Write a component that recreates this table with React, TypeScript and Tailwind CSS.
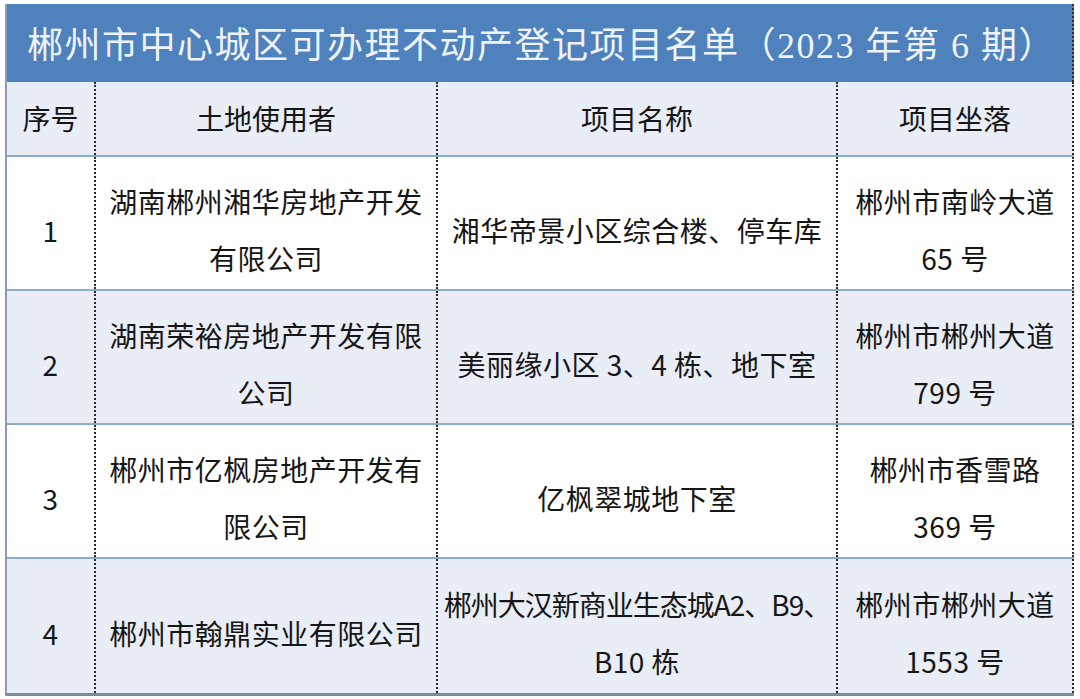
import React from 'react';

type Row = {
  no: string;
  owner: string[];
  project: string[];
  location: string[];
  shaded: boolean;
};

const rows: Row[] = [
  {
    no: '1',
    owner: ['湖南郴州湘华房地产开发', '有限公司'],
    project: ['湘华帝景小区综合楼、停车库'],
    location: ['郴州市南岭大道', '65 号'],
    shaded: false,
  },
  {
    no: '2',
    owner: ['湖南荣裕房地产开发有限', '公司'],
    project: ['美丽缘小区 3、4 栋、地下室'],
    location: ['郴州市郴州大道', '799 号'],
    shaded: true,
  },
  {
    no: '3',
    owner: ['郴州市亿枫房地产开发有', '限公司'],
    project: ['亿枫翠城地下室'],
    location: ['郴州市香雪路', '369 号'],
    shaded: false,
  },
  {
    no: '4',
    owner: ['郴州市翰鼎实业有限公司'],
    project: ['郴州大汉新商业生态城A2、B9、', 'B10 栋'],
    location: ['郴州市郴州大道', '1553 号'],
    shaded: true,
  },
];

const cellBase =
  'flex flex-col items-center justify-center text-center whitespace-nowrap border-r-2 border-dotted border-[#2b2b2b]';

const Lines: React.FC<{ lines: string[] }> = ({ lines }) => (
  <>
    {lines.map((l, i) => (
      <span key={i} className={l.includes('A2') ? 'tracking-[-1px]' : ''}>
        {l}
      </span>
    ))}
  </>
);

const App: React.FC = () => {
  return (
    <div
      className="w-[1080px] h-[699px] bg-white pt-[4px] pl-[5px] text-[#161616]"
      style={{ fontFamily: '"Noto Sans CJK SC", "Noto Sans", sans-serif' }}
    >
      <div className="w-[1069px] border-l-2 border-[#8b9bb1]">
        {/* Title */}
        <div
          className="h-[78px] bg-[#4f81bd] border-r-2 border-dotted border-[#2b2b2b] flex items-center pl-[20px] pt-[5px] text-[36px] tracking-[1.5px] text-[#eef3fa] whitespace-nowrap"
          style={{ fontFamily: '"Liberation Serif", "Noto Sans CJK SC", serif' }}
        >
          郴州市中心城区可办理不动产登记项目名单（2023 年第 6 期）
        </div>

        {/* Header */}
        <div className="flex h-[75px] bg-[#e9edf5] border-b-2 border-[#8eaacb] text-[28px] leading-[57px]">
          <div className={`${cellBase} w-[89px]`}>序号</div>
          <div className={`${cellBase} w-[342px]`}>土地使用者</div>
          <div className={`${cellBase} w-[400px]`}>项目名称</div>
          <div className={`${cellBase} w-[236px]`}>项目坐落</div>
        </div>

        {/* Body */}
        {rows.map((r, idx) => (
          <div
            key={r.no}
            className={`flex h-[134px] text-[28px] leading-[57px] tracking-[0.5px] ${
              idx === rows.length - 1 ? 'h-[137px] border-b-[3px] border-[#7d8a9b]' : 'border-b-2 border-[#8eaacb]'
            } ${r.shaded ? 'bg-[#e9edf5]' : 'bg-white'}`}
          >
            <div className={`${cellBase} w-[89px] pt-[14px]`}>{r.no}</div>
            <div className={`${cellBase} w-[342px] pt-[14px]`}>
              <Lines lines={r.owner} />
            </div>
            <div className={`${cellBase} w-[400px] pt-[14px]`}>
              <Lines lines={r.project} />
            </div>
            <div className={`${cellBase} w-[236px] pt-[14px]`}>
              <Lines lines={r.location} />
            </div>
          </div>
        ))}
      </div>
    </div>
  );
};

export default App;
